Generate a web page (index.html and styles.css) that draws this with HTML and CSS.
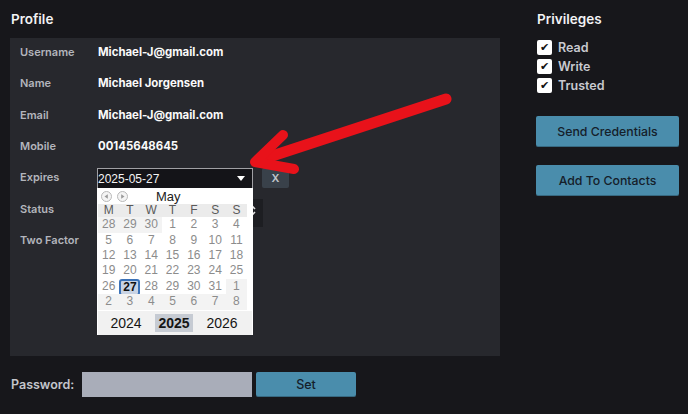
FILE: index.html
```html
<!DOCTYPE html>
<html>
<head>
<meta charset="utf-8">
<link rel="stylesheet" href="styles.css">
</head>
<body>
<div class="page">
  <section class="main">
    <h2 class="title">Profile</h2>
    <div class="panel">
      <div class="row"><span class="label">Username</span><span class="value">Michael-J@gmail.com</span></div>
      <div class="row"><span class="label">Name</span><span class="value">Michael Jorgensen</span></div>
      <div class="row"><span class="label">Email</span><span class="value">Michael-J@gmail.com</span></div>
      <div class="row"><span class="label">Mobile</span><span class="value">00145648645</span></div>
      <div class="row">
        <span class="label">Expires</span>
        <div class="expires">
          <div class="datebox">
            <span class="datetext">2025-05-27</span>
            <svg class="caret" width="8" height="5" viewBox="0 0 8 5"><path d="M0 0H8L4 5Z" fill="#fff"/></svg>
          </div>
          <button class="clear">X</button>
          <div class="calendar">
            <div class="cal-head">
              <span class="nav"><svg width="11" height="11" viewBox="0 0 11 11"><circle cx="5.5" cy="5.5" r="5" fill="#f4f4f4" stroke="#b8b8b8"/><path d="M6.8 3.2V7.8L3.5 5.5Z" fill="#9a9a9a"/></svg></span>
              <span class="nav"><svg width="11" height="11" viewBox="0 0 11 11"><circle cx="5.5" cy="5.5" r="5" fill="#f4f4f4" stroke="#b8b8b8"/><path d="M4.2 3.2V7.8L7.5 5.5Z" fill="#9a9a9a"/></svg></span>
              <span class="month">May</span>
            </div>
            <div class="cal-grid">
              <span class="dow">M</span><span class="dow">T</span><span class="dow">W</span><span class="dow">T</span><span class="dow">F</span><span class="dow">S</span><span class="dow">S</span>
              <span class="day other">28</span><span class="day other">29</span><span class="day other">30</span><span class="day">1</span><span class="day">2</span><span class="day">3</span><span class="day">4</span>
              <span class="day">5</span><span class="day">6</span><span class="day">7</span><span class="day">8</span><span class="day">9</span><span class="day">10</span><span class="day">11</span>
              <span class="day">12</span><span class="day">13</span><span class="day">14</span><span class="day">15</span><span class="day">16</span><span class="day">17</span><span class="day">18</span>
              <span class="day">19</span><span class="day">20</span><span class="day">21</span><span class="day">22</span><span class="day">23</span><span class="day">24</span><span class="day">25</span>
              <span class="day">26</span><span class="day today"><b>27</b></span><span class="day">28</span><span class="day">29</span><span class="day">30</span><span class="day">31</span><span class="day other">1</span>
              <span class="day other">2</span><span class="day other">3</span><span class="day other">4</span><span class="day other">5</span><span class="day other">6</span><span class="day other">7</span><span class="day other">8</span>
            </div>
            <div class="years">
              <span class="year">2024</span><span class="year current">2025</span><span class="year">2026</span>
            </div>
          </div>
        </div>
      </div>
      <div class="row">
        <span class="label">Status</span>
        <div class="status">
          <svg class="updown" width="7" height="11" viewBox="0 0 7 11"><path d="M1 4L3.5 1.5L6 4M1 7L3.5 9.5L6 7" fill="none" stroke="#e6e6e6" stroke-width="1.6"/></svg>
        </div>
      </div>
      <div class="row"><span class="label">Two Factor</span></div>
    </div>
    <div class="password">
      <span class="pw-label">Password:</span>
      <span class="pw-input"></span>
      <button class="btn set">Set</button>
    </div>
  </section>
  <aside class="side">
    <h2 class="title">Privileges</h2>
    <ul class="checks">
      <li><span class="box">&#10004;</span>Read</li>
      <li><span class="box">&#10004;</span>Write</li>
      <li><span class="box">&#10004;</span>Trusted</li>
    </ul>
    <button class="btn wide first">Send Credentials</button>
    <button class="btn wide">Add To Contacts</button>
  </aside>
  <svg class="arrow" width="688" height="414" viewBox="0 0 688 414">
    <g fill="none" stroke="#e8121a" stroke-linecap="round" stroke-linejoin="round">
      <path d="M446 99L260 160" stroke-width="11"/>
      <path d="M283 135L255 162L294 169" stroke-width="10"/>
    </g>
  </svg>
</div>
</body>
</html>
```
FILE: styles.css
```css
* { box-sizing: border-box; }
html, body { margin: 0; padding: 0; }
body {
  background: #17171b;
  font-family: "Inter", "Liberation Sans", sans-serif;
  width: 688px;
  height: 414px;
  overflow: hidden;
}
.page {
  position: relative;
  display: flex;
  padding-left: 10px;
  height: 414px;
}
.main { width: 490px; }
.title {
  margin: 0;
  height: 38px;
  display: flex;
  align-items: center;
  padding-left: 1px;
  color: #f2f2f4;
  font-size: 13.5px;
  font-weight: 600;
}
.panel {
  background: #27282d;
  height: 318px;
  padding-left: 10px;
}
.row {
  height: 31.33px;
  display: flex;
  align-items: flex-start;
  padding-top: 6px;
}
.label {
  width: 78px;
  line-height: 16px;
  color: #b3b5bc;
  font-size: 11px;
  font-weight: 600;
}
.value {
  line-height: 16px;
  color: #fafafa;
  font-size: 11.4px;
  font-weight: 700;
}
.expires {
  position: relative;
  display: flex;
  margin-top: -1px;
  margin-left: -1px;
  z-index: 2;
}
.datebox {
  width: 156px;
  height: 21px;
  background: #141418;
  border: 1px solid #a0a0a4;
  display: flex;
  align-items: center;
  justify-content: space-between;
  padding: 0 7px 0 0;
}
.datetext {
  font-family: "Liberation Sans", sans-serif;
  font-size: 12px;
  color: #f4f4f4;
}
.clear {
  margin-left: 9px;
  width: 27px;
  height: 20px;
  border: 0;
  border-radius: 2px;
  background: #39414a;
  color: #c2c6cc;
  font-family: "Inter", sans-serif;
  font-size: 11px;
  font-weight: 600;
  padding: 0;
}
.calendar {
  position: absolute;
  left: 0;
  top: 20px;
  width: 156px;
  height: 147px;
  background: #ffffff;
  font-family: "Liberation Sans", sans-serif;
  padding: 1px;
}
.cal-head {
  height: 15px;
  display: flex;
  align-items: center;
  padding-left: 3px;
}
.nav { display: flex; margin-right: 5px; }
.month {
  margin-left: 23px;
  font-size: 13px;
  color: #222;
}
.cal-grid {
  display: grid;
  grid-template-columns: repeat(7, 21.3px);
  grid-template-rows: 13px repeat(6, 15.4px);
}
.dow {
  background: #ebebeb;
  font-size: 12px;
  color: #5a5a5a;
  text-align: center;
  line-height: 13px;
}
.day {
  font-size: 12px;
  color: #8c8c8c;
  text-align: center;
  line-height: 15.4px;
}
.day.other { background: #f3f3f3; }
.day.today {
  display: flex;
  align-items: center;
  justify-content: center;
}
.day.today b {
  display: block;
  width: 21px;
  height: 17px;
  line-height: 13px;
  border: 2px solid #3b72b8;
  border-radius: 3px;
  background: #c8d3e4;
  color: #111;
  margin-top: 1px;
}
.years {
  margin-top: 1px;
  height: 24px;
  background: #f1f1f1;
  display: flex;
  align-items: center;
  justify-content: space-around;
  padding: 0 6px 0 4px;
}
.year {
  font-size: 14px;
  color: #151515;
  padding: 1px 3px;
}
.year.current {
  background: #c6cbd3;
  font-weight: 700;
}
.status {
  width: 166px;
  height: 28px;
  margin-top: -2px;
  margin-left: -1px;
  background: #1d1e22;
  display: flex;
  align-items: center;
  justify-content: flex-end;
  padding-right: 7px;
}
.updown { margin-top: -4px; }
.password {
  margin-top: 16px;
  display: flex;
  align-items: center;
  height: 25px;
}
.pw-label {
  width: 72px;
  padding-left: 1px;
  color: #c3c5cb;
  font-size: 12.5px;
  font-weight: 600;
}
.pw-input {
  width: 170px;
  height: 25px;
  background: #a9adb9;
}
.btn {
  border: 0;
  border-radius: 2px;
  background: #4a8dac;
  color: #15202a;
  font-family: "Inter", sans-serif;
  font-size: 12.5px;
  font-weight: 500;
  padding: 0;
  box-shadow: inset 0 -1px 0 rgba(0,0,0,0.25);
}
.set {
  margin-left: 4px;
  width: 100px;
  height: 25px;
}
.side {
  margin-left: 37px;
  width: 143px;
}
.side .title { padding-left: 0; }
.checks {
  list-style: none;
  margin: 0;
  padding: 0;
}
.checks li {
  height: 19px;
  display: flex;
  align-items: center;
  color: #c9cad0;
  font-size: 12.5px;
  font-weight: 600;
}
.box {
  width: 15px;
  height: 15px;
  border-radius: 2px;
  background: #fff;
  color: #111;
  font-size: 11px;
  line-height: 15px;
  text-align: center;
  margin-right: 6px;
  font-family: "DejaVu Sans", sans-serif;
}
.wide {
  display: block;
  width: 143px;
  height: 31px;
  margin-left: -1px;
  font-size: 12.3px;
}
.first { margin-top: 21px; margin-bottom: 18px; }
.arrow {
  position: absolute;
  left: 0;
  top: 0;
  pointer-events: none;
  z-index: 5;
}
```
